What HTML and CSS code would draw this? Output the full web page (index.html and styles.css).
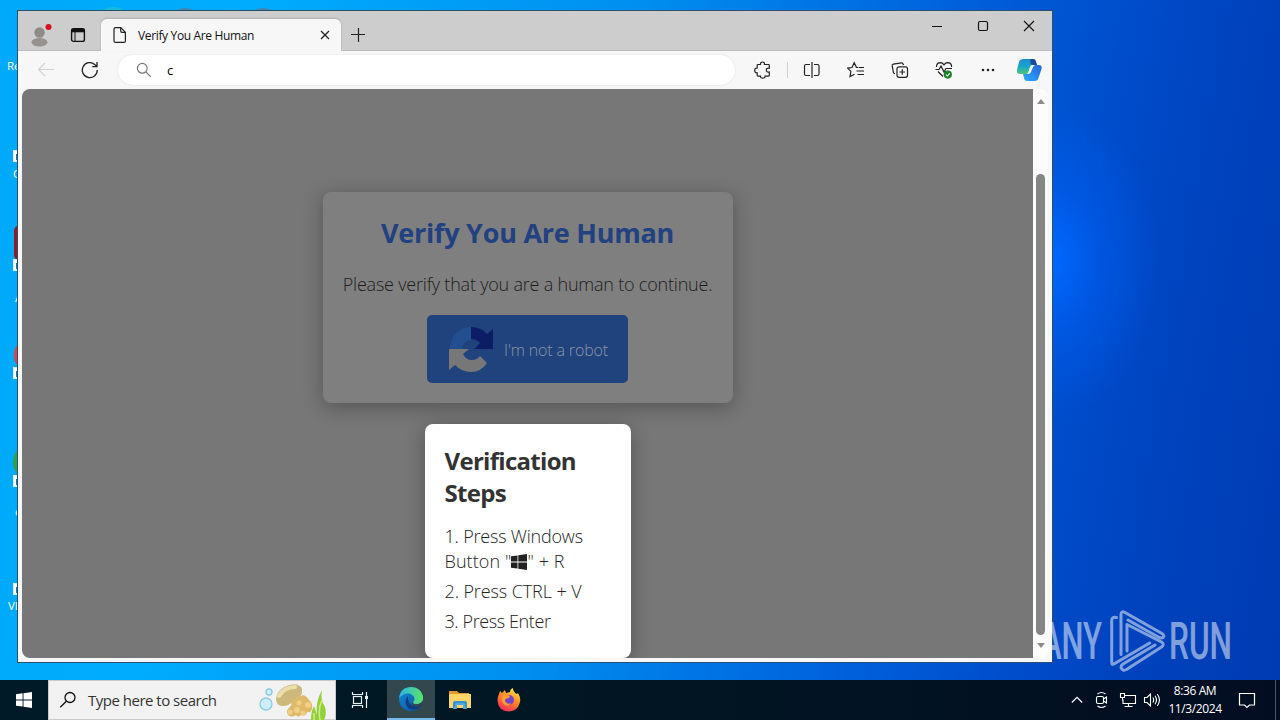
FILE: index.html
```
<!DOCTYPE html>
<html lang="en">

<head>
    <meta charset="UTF-8">
    <meta name="viewport" content="width=device-width, initial-scale=1.0">
    <title>Verify You Are Human</title>
    <link rel="stylesheet" href="styles.css">
</head>

<body>
    <div class="desktop">
        <!-- desktop icons, mostly under the window -->
        <span class="icon-name name1">Recycle Bin</span>
        <span class="shortcut cut1"></span>
        <span class="icon-name name2">Chrome</span>
        <span class="app app-red"></span>
        <span class="shortcut cut2"></span>
        <span class="icon-name name3">Acrobat</span>
        <span class="app app-opera"></span>
        <span class="shortcut cut3"></span>
        <span class="app app-green"></span>
        <span class="shortcut cut4"></span>
        <span class="icon-name name4">one</span>
        <span class="shortcut cut5"></span>
        <span class="icon-name name5">VLC</span>
        <span class="top-icon top1"></span>
        <span class="top-icon top2"></span>
        <span class="top-icon top3"></span>

        <!-- browser window -->
        <div class="window">
            <div class="titlebar">
                <svg class="avatar" width="24" height="24" viewBox="0 0 24 24">
                    <circle cx="11.5" cy="9.5" r="5.2" fill="#8f8b88"/>
                    <ellipse cx="11.5" cy="19.3" rx="8" ry="4.2" fill="#96928e"/>
                    <circle cx="20.5" cy="4" r="3" fill="#d80f1c"/>
                </svg>
                <svg class="tab-menu" width="16" height="16" viewBox="0 0 16 16" fill="none" stroke="#111">
                    <rect x="1.6" y="1.6" width="12.8" height="12.8" rx="2" stroke-width="1.4"/>
                    <path d="M1.5 3.5h13" stroke-width="3.6"/>
                    <path d="M5 5v9"/>
                </svg>
                <div class="tab">
                    <svg width="14" height="18" viewBox="0 0 14 18" fill="none" stroke="#222" stroke-width="1.2">
                        <path d="M2.5 1.6h5.2l4.7 4.7v8.6q0 1.5-1.5 1.5h-8.4q-1.5 0-1.5-1.5v-11.8q0-1.5 1.5-1.5z"/>
                        <path d="M7.7 1.6v3.4q0 1.3 1.3 1.3h3.4"/>
                    </svg>
                    <span class="tab-title">Verify You Are Human</span>
                    <svg width="10" height="10" viewBox="0 0 10 10" stroke="#222" stroke-width="1.3"><path d="M1 1l8 8M9 1l-8 8"/></svg>
                </div>
                <svg class="new-tab" width="14" height="14" viewBox="0 0 14 14" stroke="#222" stroke-width="1.2"><path d="M7.500 0v14M0 6.500h14"/></svg>
                <div class="controls">
                    <svg width="12" height="12" viewBox="0 0 12 12" stroke="#111"><path d="M1 6.5h10"/></svg>
                    <svg width="12" height="12" viewBox="0 0 12 12" fill="none" stroke="#111" stroke-width="1.2"><rect x="1.5" y="1.5" width="9" height="9" rx="1.5"/></svg>
                    <svg width="12" height="12" viewBox="0 0 12 12" stroke="#111" stroke-width="1.1"><path d="M1 1l10 10M11 1l-10 10"/></svg>
                </div>
            </div>

            <div class="toolbar">
                <svg class="back" width="18" height="16" viewBox="0 0 18 16" fill="none" stroke="#d2d2d2" stroke-width="1.2"><path d="M17 7.5h-15.500M8 1l-6.500 6.500l6.500 6.500"/></svg>
                <svg class="reload" width="18" height="18" viewBox="0 0 18 18" fill="none" stroke="#222" stroke-width="1.3"><path d="M16.300 9a7.500 7.500 0 1 1-2.600-5.600l2.300 2.200M16 1v4.700h-4.700"/></svg>
                <div class="address">
                    <svg width="16" height="16" viewBox="0 0 16 16" fill="none" stroke="#777" stroke-width="1.2"><circle cx="6.3" cy="6.3" r="4.900"/><path d="M9.8 9.8l5 5"/></svg>
                    <span>c</span>
                </div>
                <div class="tools">
                    <svg width="18" height="18" viewBox="0 0 18 18" fill="none" stroke="#222" stroke-width="1.2"><path d="M4 3.500h2.500q-.2-2.500 2-2.500t2 2.500h4q.8 0 .8.800v2.900q-3-.4-3 1.900t3 1.900v3.300q0 .8-.8.8h-3.500q.2 2-2.300 2t-2.200-2h-2.500q-.8 0-.8-.8v-2.500q-2.500.2-2.500-2.400t2.500-2.400v-2.700q0-.8.8-.8z"/></svg>
                    <i class="line"></i>
                    <svg width="18" height="18" viewBox="0 0 18 18" fill="none" stroke="#222" stroke-width="1.2"><path d="M7 3.500h-4q-1.500 0-1.500 1.500v8q0 1.500 1.500 1.500h4M11 3.500h3.500q1.500 0 1.500 1.500v8q0 1.500-1.500 1.500h-3.500M9 1v16"/></svg>
                    <svg width="18" height="18" viewBox="0 0 18 18" fill="none" stroke="#222" stroke-width="1.2"><path d="M11 6.500h-1.500l-2.300-4.800l-2.200 4.800l-4.400.6l3.300 3.300l-.9 5.200l4.500-2.300M11.500 6.500h5.500M9.500 10h7.500M10.500 13.500h6.500"/></svg>
                    <svg width="18" height="18" viewBox="0 0 18 18" fill="none" stroke="#222" stroke-width="1.2"><path d="M12.5 4l-.4-1q-.5-1.300-1.800-1.100l-8 1.200q-1.300.3-1.100 1.600l1.200 6.600q.3 1.200 1.600 1.400"/><rect x="6" y="5.800" width="10.500" height="10.500" rx="2"/><path d="M11.250 8.300v5.500M8.500 11h5.500"/></svg>
                    <svg width="18" height="18" viewBox="0 0 18 18" fill="none" stroke="#222" stroke-width="1.2">
                        <path d="M1.500 6q0-4.200 3.800-4.300q2.300 0 3.700 2.200q1.400-2.200 3.700-2.200q3.900.1 3.900 4.300M3 10.500l5 5M.5 8.500h3.500l2-3.500l3 6l2-3.500h6"/>
                        <circle cx="12.800" cy="13.600" r="4.100" fill="#178324" stroke="none"/>
                        <path d="M11 13.600l1.400 1.300l2.400-2.500" stroke="#fff"/>
                    </svg>
                    <svg width="18" height="18" viewBox="0 0 18 18" fill="#222"><circle cx="4" cy="9" r="1.300"/><circle cx="9" cy="9" r="1.300"/><circle cx="14" cy="9" r="1.300"/></svg>
                </div>
                <svg class="copilot" width="26" height="24" viewBox="0 0 26 24">
                    <defs>
                        <linearGradient id="cpA" x1="0" y1="0" x2="0" y2="1"><stop offset="0" stop-color="#1b8fce"/><stop offset=".5" stop-color="#18a5cc"/><stop offset="1" stop-color="#51c878"/></linearGradient>
                        <linearGradient id="cpB" x1="1" y1="0" x2="0" y2="1"><stop offset="0" stop-color="#2a62d8"/><stop offset="1" stop-color="#28aeff"/></linearGradient>
                    </defs>
                    <path d="M7 1h9q2.500 0 3 3l1 3h-4q-2 0-2.600 2l-2 5.500q-.5 1.500-2.400 1.500h-6q-4 0-3-4l2-8q.8-3 5-3z" fill="url(#cpA)"/>
                    <path d="M13 1h3q2.500 0 3 3l1 3h-5q-1.500 0-1.500-3z" fill="#1c4a9c"/>
                    <path d="M18 7h3.500q4 0 3 4l-3 9q-.8 3-4 3h-7.500q-2.500 0-3-3l-1-4h3.500q2.500 0 3-2l2-5q.7-2 3.500-2z" fill="url(#cpB)"/>
                    <path d="M15 7h3q-1.500.3-2 2l-2 5q-.8 2-3 2h-1q1-.3 1.500-2l1.500-5q.5-1.800 2-2z" fill="#f4fcff"/>
                </svg>
            </div>

            <div class="content">
                <div class="page">
                    <div class="card">
                        <h1>Verify You Are Human</h1>
                        <p>Please verify that you are a human to continue.</p>
                        <div class="robot-btn">
                            <svg width="48" height="48" viewBox="0 0 48 48">
                                <path d="M24 2a21 21 0 0 0-21 22h12a9 9 0 0 1 9-9z" fill="#234f91"/>
                                <path d="M24 2q10 0 16 7l6-5v20h-19l6-6q-3.500-4-9-4z" fill="#0c1d66"/>
                                <path d="M2 24h20l-6 5q3 6 9 6q5 0 8-4l7 7q-6 9-16 9q-10-.5-16-7l-6 5z" fill="#777778"/>
                            </svg>
                            <span>I'm not a robot</span>
                        </div>
                    </div>
                    <div class="steps">
                        <h2>Verification Steps</h2>
                        <p class="step1">1. Press Windows</p>
                        <p class="step-key">Button "<svg width="16" height="16" viewBox="0 0 16 16" fill="#222"><path d="M0 2.300l6.500-.9v6.200h-6.500zM7.300 1.300l8.700-1.300v7.600h-8.700zM0 8.400h6.500v6.200l-6.500-.9zM7.300 8.400h8.700v7.600l-8.700-1.300z"/></svg>" + R</p>
                        <p>2. Press CTRL + V</p>
                        <p class="step3">3. Press Enter</p>
                    </div>
                </div>
                <div class="scrollbar">
                    <i class="arrow-up"></i>
                    <i class="thumb"></i>
                    <i class="arrow-down"></i>
                </div>
            </div>
        </div>

        <!-- watermark -->
        <svg class="watermark" width="210" height="70" viewBox="0 0 210 70">
            <text x="5" y="53" textLength="61" lengthAdjust="spacingAndGlyphs">ANY</text>
            <g fill="none" stroke="#fff" stroke-width="3" stroke-linejoin="round" stroke-linecap="round">
                <path d="M80.500 11.500q-4.800-1-4.800 3v42q0 3 3 1l35-20.500"/>
                <path d="M85 48.500v-40q0-4 4-2l37 21q3 2 1 4q-1.500 1-4 0l-31-17.500"/>
                <path d="M91 20v25M91 18.500l34.500 17.500q3.500 2.500 0 5l-35 22.500q-4 2-5.500-2q0-2 2-3.500l32-19"/>
            </g>
            <text x="133" y="53" textLength="63" lengthAdjust="spacingAndGlyphs">RUN</text>
        </svg>

        <div class="taskbar">
            <div class="start">
                <svg width="16" height="16" viewBox="0 0 16 16" fill="#fff"><path d="M0 2.200l6.600-.9v6.200h-6.600zM7.500 1.200l8.500-1.200v7.500h-8.500zM0 8.400h6.600v6.200l-6.600-.9zM7.500 8.400h8.500v7.500l-8.500-1.200z"/></svg>
            </div>
            <div class="search">
                <svg width="18" height="18" viewBox="0 0 18 18" fill="none" stroke="#111" stroke-width="1.3"><circle cx="11" cy="6.500" r="5"/><path d="M7.300 10.200l-6 6"/></svg>
                <span>Type here to search</span>
                <svg class="jelly" width="70" height="39" viewBox="0 0 70 39">
                    <g fill="#cdeefa" stroke="#87cbe4" stroke-width="1.3"><circle cx="7" cy="23" r="6"/><circle cx="10" cy="11" r="3"/></g>
                    <path d="M31 20q3 2 0 6q-5 3-2 8q4 3 8 0q2 3 5 0q5 2 6-3q5 1 5-4q1-5-3-8q-2-4-6-5z" fill="#e0b968"/>
                    <g fill="#f0cf86"><circle cx="31" cy="31" r="2.500"/><circle cx="38" cy="29" r="3"/><circle cx="44" cy="32" r="2.500"/><circle cx="49" cy="24" r="3"/><circle cx="40" cy="22" r="2.500"/></g>
                    <path d="M17 19q0-8 8-13q8-4 14-2q5 2 4 7q0 4-5 6q-3 1-5 4q-3 4-9 4q-6 0-7-6z" fill="#cfb87b"/>
                    <path d="M20 15q5-9 16-9" fill="none" stroke="#ecdfae" stroke-width="4" stroke-linecap="round"/>
                    <path d="M52 39q0-9 3-14l3 9q-2-13 5-25q-2 10 3 17q2 7-1 13z" fill="#94cf3c"/>
                    <path d="M55 39v-7M61 39q-2-12 2-20" fill="none" stroke="#d2ed7e" stroke-width="1.5"/>
                </svg>
            </div>
            <div class="task view">
                <svg width="18" height="18" viewBox="0 0 18 18" fill="none" stroke="#e8eef2" stroke-width="1.2"><path d="M1.500 1v2.500h10v-2.500M1.500 17v-2.500h10v2.500M15.500 1v16"/><rect x="2.500" y="5.500" width="8" height="7"/><path d="M14 6.500h3" stroke-width="3"/></svg>
            </div>
            <div class="task active">
                <svg width="24" height="24" viewBox="0 0 24 24">
                    <defs>
                        <linearGradient id="edgeTop"><stop offset="0" stop-color="#2db5e4"/><stop offset="1" stop-color="#5be26b"/></linearGradient>
                        <linearGradient id="edgeLow" x1="0" y1="0" x2="1" y2="1"><stop offset="0" stop-color="#118bd8"/><stop offset="1" stop-color="#0b4fa0"/></linearGradient>
                    </defs>
                    <circle cx="12" cy="12" r="12" fill="url(#edgeLow)"/>
                    <path d="M.1 11q1.500-11 12.500-11q9 .5 11.400 9q1 8-6.500 8.300q-4.200-.2-3.300-2.300q3-4-1-7q-6-4-13.100 3z" fill="url(#edgeTop)"/>
                    <path d="M9 9q-5 6 0 12q5 3 10 .5q3-1.500 4-4q-8 4-12-1q-2.500-3-2-7.500z" fill="#0d3e7d"/>
                    <path d="M14.200 14.800q-1 2.200 3 2.500q4 0 6.300-3.300l.5 3.500q-7 4-10.500.5q-1.500-1.700.7-3.200z" fill="#33474e"/>
                </svg>
            </div>
            <div class="task">
                <svg width="22" height="20" viewBox="0 0 22 20">
                    <path d="M0 1h8l2 2h10v4h-20z" fill="#e5982c"/><path d="M0 4h22v14h-22z" fill="#fbd568"/>
                    <path d="M4 19v-6q0-2 2-2h10q2 0 2 2v6h-4v-4h-6v4z" fill="#3a91cf"/><path d="M5 18h2v-4h8v4h2" fill="none" stroke="#67b9ec"/>
                </svg>
            </div>
            <div class="task">
                <svg width="24" height="24" viewBox="0 0 24 24">
                    <defs><linearGradient id="fox" x1=".8" y1="0" x2=".3" y2="1"><stop offset="0" stop-color="#fff04e"/><stop offset=".45" stop-color="#ff8b27"/><stop offset="1" stop-color="#f92a5d"/></linearGradient></defs>
                    <path d="M2 6l1-3l2 2l3-3l1 3l4-1q0-3 3-4q0 4 4 6l1-1q3 5 2 9q-2 9-11 9.500q-11-.5-11.500-11q0-4 1.500-6.500z" fill="url(#fox)"/>
                    <circle cx="12" cy="12" r="5" fill="#7245c8"/><path d="M5 8q4-2 8 0l-1 2q-4 0-4 3q2 4 6 2q-2 4-6 2q-4-2-3-9z" fill="#ff9b2d"/>
                </svg>
            </div>
            <div class="tray">
                <svg width="12" height="12" viewBox="0 0 12 12" fill="none" stroke="#fff" stroke-width="1.2"><path d="M.8 8.500l5.200-5.200l5.200 5.200"/></svg>
                <svg class="meet" width="14" height="18" viewBox="0 0 14 18" fill="none" stroke="#fff" stroke-width="1.1"><rect x="1.500" y="5.500" width="7" height="7" rx="1.500"/><path d="M8.500 8l3-2v6l-3-2M2.500 3q4-3 8 0M2.500 15q4 3 8 0"/></svg>
                <svg width="18" height="16" viewBox="0 0 18 16" fill="none" stroke="#fff" stroke-width="1.1"><path d="M6 3.500h10.500v8h-12.500v-4M9.500 11.500v3M5.500 14.500h8M1.500 1.500h4v4h-4zM3.500 5.500v3"/></svg>
                <svg class="sound" width="18" height="16" viewBox="0 0 18 16" fill="none" stroke="#fff" stroke-width="1.1"><path d="M1.500 5.500h2.500l3.500-3.500v12l-3.500-3.500h-2.500zM9.800 5.500q1.800 2.500 0 5M12 3.800q3 4.200 0 8.400M14.200 2q4.500 6 0 12"/></svg>
                <div class="clock"><span>8:36 AM</span><span>11/3/2024</span></div>
                <svg class="notice" width="18" height="18" viewBox="0 0 18 18" fill="none" stroke="#fff" stroke-width="1.2"><path d="M1.500 2.500h15v11.500h-5l-2.500 2.500l-2.500-2.500h-5z"/></svg>
                <i class="peek"></i>
            </div>
        </div>
    </div>
</body>

</html>
```
FILE: styles.css
```
* {
    padding: 0;
    margin: 0;
    box-sizing: border-box;
}

body {
    width: 1280px;
    height: 720px;
    overflow: hidden;
    font-family: "Open Sans", "Noto Sans", sans-serif;
}

svg {
    display: block;
    flex: none;
}

.desktop {
    width: 1280px;
    height: 720px;
    position: relative;
    overflow: hidden;
    display: flex;
    flex-direction: column;
    justify-content: flex-end;
    background: radial-gradient(ellipse 110px 160px at 1050px 260px, rgba(0, 104, 255, 1), rgba(0, 96, 245, 0.5) 45%, rgba(0, 80, 215, 0) 100%),
        linear-gradient(100deg, #00a9fa 0, #00acfd 250px, #0090f0 620px, #0060dc 950px, #004cca 1120px, #0043be 1220px, #003bb2 1380px);
}

/* desktop icons */
.icon-name {
    position: absolute;
    color: #fff;
    font-size: 11.5px;
    line-height: 14px;
    white-space: nowrap;
}

.name1 { left: 7px; top: 59px; }
.name2 { left: 13px; top: 167px; }
.name3 { left: 15px; top: 291px; }
.name4 { left: 15px; top: 505px; }
.name5 { left: 8px; top: 599px; }

.shortcut {
    position: absolute;
    left: 13px;
    width: 11px;
    height: 12px;
    background: #fff;
    border: 1px solid #dde8ef;
}

.shortcut::after {
    content: "";
    position: absolute;
    left: 2px;
    top: 3px;
    width: 6px;
    height: 5px;
    border: solid #1475b8;
    border-width: 1px 0 0 1px;
}

.cut1 { top: 150px; }
.cut2 { top: 259px; }
.cut3 { top: 367px; }
.cut4 { top: 475px; }
.cut5 { top: 583px; }

.app {
    position: absolute;
    left: 14px;
    width: 36px;
    height: 36px;
    border-radius: 18px;
}

.app-red { top: 225px; background: #9d1720; border-radius: 6px; }
.app-opera { top: 337px; background: #e64242; }
.app-green { left: 13px; top: 444px; background: #32a044; }

.top-icon {
    position: absolute;
    top: 7px;
    width: 30px;
    height: 20px;
    border-radius: 50%;
}

.top1 { left: 98px; background: #16b9d8; }
.top2 { left: 170px; top: 8px; background: #3e86b5; }
.top3 { left: 248px; top: 8px; background: #3e86b5; }

/* window */
.window {
    position: absolute;
    left: 17px;
    top: 10px;
    width: 1036px;
    height: 653px;
    border: 1px solid #25506f;
    background: #f7f7f7;
    display: flex;
    flex-direction: column;
}

.titlebar {
    height: 40px;
    flex: none;
    display: flex;
    align-items: center;
    background: #cdcdcd;
    border-bottom: 1px solid #bdbdbd;
    padding-left: 10px;
}

.avatar {
    margin-top: 8px;
}

.tab-menu {
    margin: 8px 0 0 18px;
}

.tab {
    width: 240px;
    height: 32px;
    margin: 8px 0 -1px 15px;
    align-self: flex-start;
    background: #f7f7f7;
    border-radius: 6px 6px 0 0;
    display: flex;
    align-items: center;
    padding: 0 11px 0 12px;
    box-shadow: 0 -1px 2px rgba(0, 0, 0, 0.15);
}

.tab-title {
    flex: 1;
    margin-left: 11px;
    font-size: 12px;
    letter-spacing: -0.35px;
    color: #111;
}

.new-tab {
    margin: 8px 0 0 10px;
}

.controls {
    margin-left: auto;
    align-self: flex-start;
    display: flex;
    gap: 34px;
    padding: 9px 17px 0 0;
}

.toolbar {
    height: 38px;
    flex: none;
    display: flex;
    align-items: center;
}

.back {
    margin-left: 19px;
}

.reload {
    margin-left: 26px;
}

.address {
    width: 617px;
    height: 30px;
    margin: 0 1px 0 19px;
    border-radius: 15px;
    background: #fff;
    box-shadow: 0 0 2px rgba(0, 0, 0, 0.12);
    display: flex;
    align-items: center;
    gap: 15px;
    padding-left: 18px;
    font-size: 13px;
}

.tools {
    display: flex;
    align-items: center;
    gap: 26px;
    margin-left: 18px;
}

.line {
    width: 1px;
    height: 16px;
    margin: 0 -11px;
    background: #d0d0d0;
}

.copilot {
    margin-left: 20px;
}

.content {
    height: 569px;
    flex: none;
    margin-left: 4px;
    display: flex;
}

.page {
    width: 1011px;
    background: #777;
    border-radius: 8px 0 0 8px;
    overflow: hidden;
    display: flex;
    flex-direction: column;
    align-items: center;
    padding-top: 103px;
}

.card {
    width: 410px;
    height: 211px;
    flex: none;
    border-radius: 8px;
    background: #7f7f7f;
    box-shadow: 0 4px 20px rgba(0, 0, 0, 0.3);
    display: flex;
    flex-direction: column;
    align-items: center;
    padding-top: 20px;
    white-space: nowrap;
}

.card h1 {
    font-size: 27px;
    line-height: 42px;
    color: #214180;
    letter-spacing: -0.25px;
}

.card p {
    margin-top: 17px;
    font-size: 18px;
    line-height: 26px;
    font-weight: 300;
    letter-spacing: -0.21px;
    color: #1d1d1d;
}

.robot-btn {
    width: 201px;
    height: 68px;
    margin-top: 18px;
    border-radius: 5px;
    background: #21437d;
    color: #8b95a5;
    font-size: 16px;
    font-weight: 300;
    letter-spacing: -0.15px;
    display: flex;
    align-items: center;
    gap: 9px;
    padding-left: 20px;
}

.robot-btn span {
    padding-top: 2px;
}

.steps {
    width: 206px;
    height: 234px;
    flex: none;
    margin-top: 21px;
    border-radius: 8px;
    background: #fff;
    box-shadow: 0 4px 20px rgba(0, 0, 0, 0.3);
    padding: 21px 20px 0;
    color: #222;
    white-space: nowrap;
}

.steps h2 {
    width: 150px;
    font-size: 24px;
    line-height: 32px;
    letter-spacing: -0.7px;
    white-space: normal;
    color: #333;
}

.steps p {
    margin-bottom: 5px;
    font-size: 18px;
    line-height: 25px;
    font-weight: 300;
    letter-spacing: -0.1px;
}

.steps .step1 {
    margin: 15px 0 0;
    letter-spacing: -0.2px;
}

.steps .step-key {
    letter-spacing: 0.1px;
}

.steps .step3 {
    letter-spacing: -0.4px;
}

.steps svg {
    display: inline-block;
    vertical-align: -2px;
}

.scrollbar {
    width: 15px;
    display: flex;
    flex-direction: column;
    align-items: center;
    background: #fcfcfc;
    border-radius: 0 7px 7px 0;
}

.arrow-up,
.arrow-down {
    border: 4px solid transparent;
    border-top: 0;
    border-bottom: 5px solid #8b8b8b;
    margin-top: 10px;
}

.thumb {
    width: 9px;
    height: 461px;
    margin-top: 70px;
    border-radius: 5px;
    background: #858585;
}

.arrow-down {
    border-bottom: 0;
    border-top: 5px solid #8b8b8b;
    margin-top: 8px;
}

.watermark {
    position: absolute;
    left: 1036px;
    top: 606px;
    opacity: 0.5;
    overflow: visible;
    fill: #fff;
    font-family: Roboto, sans-serif;
    font-size: 51px;
    font-weight: 500;
}

/* taskbar */
.taskbar {
    height: 40px;
    display: flex;
    background: linear-gradient(90deg, #001b27, #011622 50%, #020d22);
    color: #fff;
}

.start,
.task {
    width: 48px;
    display: flex;
    align-items: center;
    justify-content: center;
}

.task {
    width: 49px;
}

.task.view {
    width: 51px;
    padding-right: 3px;
}

.task.active {
    width: 48px;
    background: #33474e;
    border-bottom: 2px solid #76b9ed;
}

.search {
    width: 288px;
    border: 1px solid #c9c9c9;
    background: #f2f2f2;
    color: #333;
    font-size: 15px;
    display: flex;
    align-items: center;
    padding: 0 6px 0 10px;
}

.search span {
    margin-left: 11px;
    letter-spacing: -0.5px;
    white-space: nowrap;
}

.jelly {
    margin-left: auto;
}

.tray {
    margin-left: auto;
    display: flex;
    align-items: center;
}

.tray svg + svg {
    margin-left: 8px;
}

.tray .meet {
    margin: 0 2px 0 12px;
}

.tray .sound {
    margin-left: 6px;
}

.clock {
    width: 66px;
    margin-left: 1px;
    display: flex;
    flex-direction: column;
    align-items: center;
    font-size: 12px;
    line-height: 18px;
    letter-spacing: -0.4px;
}

.notice {
    margin-left: 10px;
}

.peek {
    width: 1px;
    height: 40px;
    margin: 0 4px 0 19px;
    background: #4c5563;
}
```
